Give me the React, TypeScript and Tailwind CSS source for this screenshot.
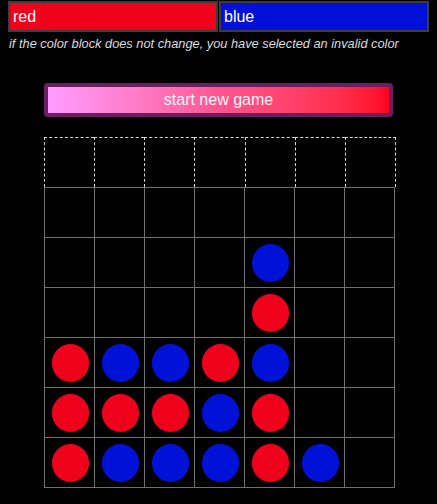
type Cell = 'r' | 'b' | null;

const board: Cell[][] = [
  [null, null, null, null, null, null, null],
  [null, null, null, null, null, null, null],
  [null, null, null, null, 'b', null, null],
  [null, null, null, null, 'r', null, null],
  ['r', 'b', 'b', 'r', 'b', null, null],
  ['r', 'r', 'r', 'b', 'r', null, null],
  ['r', 'b', 'b', 'b', 'r', 'b', null],
];

function Piece({ color }: { color: Cell }) {
  if (!color) return null;
  return (
    <div
      className={
        color === 'r'
          ? 'h-[38px] w-[37px] rounded-full bg-[#ef001b]'
          : 'h-[38px] w-[37px] rounded-full bg-[#0012d8]'
      }
    />
  );
}

export default function App() {
  return (
    <div className="min-h-[504px] bg-black font-['Liberation_Sans',Arial,sans-serif]">
      <div className="flex gap-px pl-2 pt-px">
        <div className="flex h-[31px] w-[210px] items-center border-2 border-[#3d3d3d] bg-[#ef001b] pl-[3px] text-[16px] text-white">
          red
        </div>
        <div className="flex h-[31px] w-[210px] items-center border-2 border-[#3d3d3d] bg-[#0010d8] pl-[3px] text-[16px] text-white">
          blue
        </div>
      </div>
      <p className="mt-[4px] pl-[9px] text-[12.8px] italic leading-[15px] text-[#dcdcdc]">
        if the color block does not change, you have selected an invalid color
      </p>

      <div className="pl-[44px] pt-[32px]">
        <button className="flex h-[34px] w-[349px] items-center justify-center rounded-[4px] border-4 border-[#6b1e60] bg-gradient-to-r from-[#ff9cff] via-[#ff5592] to-[#ff0020] text-[16px] text-[#fff4f6]">
          start new game
        </button>

        <div className="mt-[20px] w-[351px]">
          <div className="grid grid-cols-7">
            {board[0].map((c, i) => (
              <div
                key={i}
                className={
                  i === 6
                    ? 'flex h-[50px] w-[51px] items-center justify-center border-x border-t border-dashed border-[#d8d8d8]'
                    : 'flex h-[50px] w-[50px] items-center justify-center border-l border-t border-dashed border-[#d8d8d8]'
                }
              >
                <Piece color={c} />
              </div>
            ))}
          </div>
          <div className="grid grid-cols-7 border-b border-r border-[#707070]">
            {board.slice(1).flatMap((row, r) =>
              row.map((c, i) => (
                <div
                  key={`${r}-${i}`}
                  className="flex h-[50px] w-[50px] items-center justify-center border-l border-t border-[#707070] pl-px pt-px"
                >
                  <Piece color={c} />
                </div>
              ))
            )}
          </div>
        </div>
      </div>
    </div>
  );
}
